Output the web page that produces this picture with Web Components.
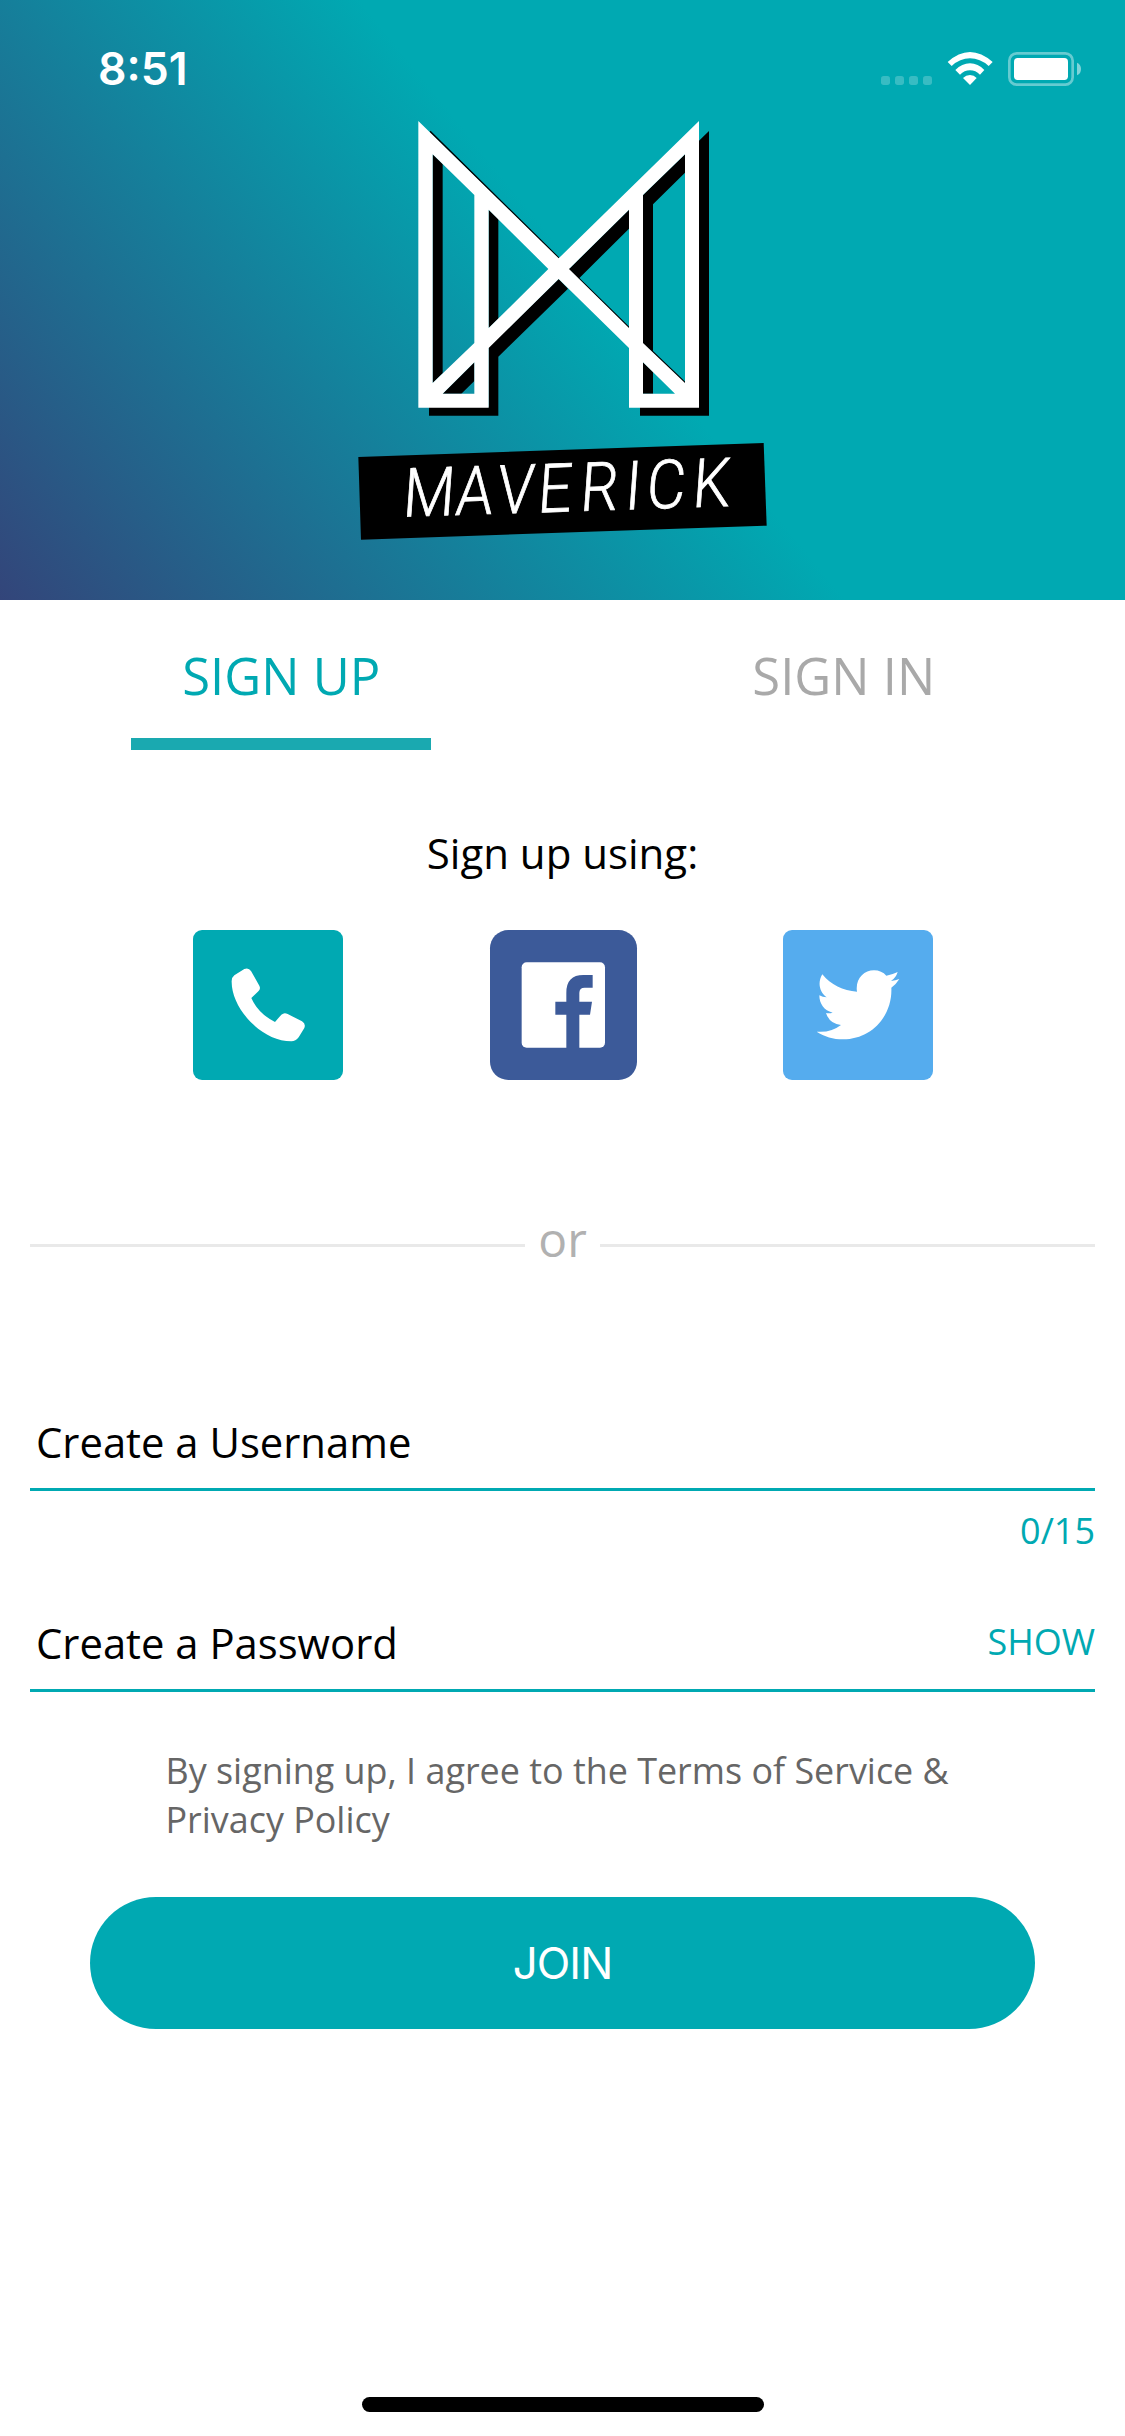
<!DOCTYPE html>
<html lang="en">
<head>
<meta charset="utf-8">
<title>Maverick</title>
<style>
html,body{margin:0;padding:0;background:#fff}
body{width:1125px;height:2436px;overflow:hidden;font-family:"Open Sans",sans-serif}
</style>
</head>
<body>
<maverick-app></maverick-app>
<script>
const define = (name, html) => customElements.define(name, class extends HTMLElement {
  constructor() {
    super();
    const t = document.createElement('template');
    t.innerHTML = html;
    this.attachShadow({ mode: 'open' }).append(t.content.cloneNode(true));
  }
});

define('status-bar', `
<style>
:host{display:flex;box-sizing:border-box;height:100px;padding:0 43px 0 98px;justify-content:space-between;font-family:Inter,sans-serif;color:#fff}
.time{font-size:44.5px;font-weight:600;line-height:54px;margin-top:42px;letter-spacing:0}
svg{display:block;margin-top:50px}
</style>
<div class="time">8:51</div>
<svg width="202" height="38" viewBox="0 0 606 114" fill="#fff">
  <g fill-opacity=".22"><rect x="3" y="78" width="27" height="27" rx="8"/><rect x="45" y="78" width="27" height="27" rx="8"/><rect x="87" y="78" width="27" height="27" rx="8"/><rect x="129" y="78" width="27" height="27" rx="8"/></g>
  <path d="M203 36Q236 6 270 6T338 36L326 48Q300 25 270 25T215 48Z"/>
  <path d="M226 60Q246 40 270 40T313 60L300 74Q287 61 270 61T240 74Z"/>
  <path d="M249 84Q258 75 270 75T290 84L270 105Z"/>
  <rect x="388" y="10" width="190" height="94" rx="22" fill="none" stroke="#fff" stroke-opacity=".4" stroke-width="8"/>
  <rect x="402" y="24" width="162" height="66" rx="11"/>
  <path d="M591 38Q603 43 603 57T591 76Z" fill-opacity=".5"/>
</svg>`);

define('brand-logo', `
<style>:host{display:block;width:440px;height:460px}svg{display:block}text{font-family:Roboto,sans-serif;font-weight:300;font-size:203px}</style>
<svg width="440" height="460" viewBox="0 0 1320 1380">
  <g fill="#000">
    <path d="M278 163l30 29v628l-30 29zM446 329l29 28v299l-29 28zM308 881l95-94v56l-39 38z"/>
    <path d="M656 537l28 29L475 770v177H267v-27h179V742z"/>
    <path d="M687 507L867 329v57L716 536zM909 285l126-122v55l-96 95v443l-30-27zM909 787l30 28v66h-30z"/>
    <path d="M1077 122l30-29v854H900v-27h177z"/>
    <path d="M270 94L656 474M686 506L867 683M909 728L1035 848" fill="none" stroke="#000" stroke-width="5"/>
  </g>
  <path fill="#fff" fill-rule="evenodd" d="M235 63L656 475 1077 63V923H867V744L656 537 446 744V923H235ZM278 163V849L403 729V285ZM446 329V684L625 507ZM308 881H403V787ZM1035 163L909 285V729L1035 849ZM867 329L687 507 867 684ZM1005 881L909 787V881Z"/>
  <path d="M55 1071L1271 1029 1280 1277 63 1319Z"/>
  <text fill="#fff" stroke="#fff" stroke-width="2.5" transform="translate(203 1250) rotate(-1.9) skewX(-6) scale(.88 1)" x="-19 160 301 440 585 738 811 968">MAVERICK</text>
</svg>`);

define('brand-header', `
<style>
:host{display:flex;flex-direction:column;height:600px;background:linear-gradient(51deg,#33457a 0,#00a9b2 657px)}
brand-logo{margin-left:340px}
</style>
<status-bar></status-bar><brand-logo></brand-logo>`);

define('auth-tab', `
<style>
:host{flex:1;display:flex;flex-direction:column;align-items:center;color:#a9a9a9}
.l{font-size:50.8px;line-height:70px;margin-top:41px}
.u{width:300px;height:12px;margin-top:27px}
:host([active]){color:#00a9b2}
:host([active]) .u{background:#1aa9b0}
</style>
<div class="l"><slot></slot></div><div class="u"></div>`);

define('social-button', `
<style>:host{display:block;width:150px;height:150px}::slotted(svg){display:block}</style><slot></slot>`);

define('or-divider', `
<style>
:host{display:flex;align-items:center;height:66px;margin:0 30px;color:#b1b1b1;font-size:48px;line-height:60px}
i{flex:1;height:3px;background:#e9e9e9;margin-top:7px}
span{width:75px;text-align:center;padding-bottom:6px}
</style><i></i><span><slot></slot></span><i></i>`);

define('form-field', `
<style>
:host{display:flex;box-sizing:border-box;margin:0 30px;height:90px;padding-left:6px;border-bottom:3px solid #00a9b2;justify-content:space-between;font-size:41.8px;line-height:60px;color:#000}
.l{margin-top:11px}
::slotted([slot=action]){font-size:36px;color:#00a9b2;line-height:60px;margin-top:10px}
</style><div class="l"><slot></slot></div><slot name="action"></slot>`);

define('join-button', `
<style>:host{display:flex;box-sizing:border-box;align-items:center;justify-content:center;height:132px;padding-top:2px;margin:0 90px;border-radius:66px;background:#00a9b2;color:#fff;font:400 43.8px/54px Inter,sans-serif;letter-spacing:-.9px}</style><slot></slot>`);

define('home-indicator', `<style>:host{display:block;width:402px;height:15px;border-radius:8px;background:#000}</style>`);

define('maverick-app', `
<style>
:host{display:flex;flex-direction:column;width:1125px;height:2436px;background:#fff;font-family:"Open Sans",sans-serif}
nav{display:flex;height:150px}
.using{text-align:center;font-size:42px;line-height:60px;margin-top:73px;color:#000}
.social{display:flex;justify-content:space-between;padding:0 192px 0 193px;margin-top:47px}
or-divider{margin-top:129px}
.user{margin-top:126px}
.count{font-size:36px;line-height:50px;color:#00a9b2;text-align:right;margin:15px 30px 0}
.pass{margin-top:46px}
.terms{font-size:35.9px;line-height:49px;color:#666;margin:54px 140px 0 165.5px}
join-button{margin-top:53px}
home-indicator{margin:368px auto 0}
</style>
<brand-header></brand-header>
<nav><auth-tab active>SIGN UP</auth-tab><auth-tab>SIGN IN</auth-tab></nav>
<div class="using">Sign up using:</div>
<div class="social">
  <social-button><svg width="150" height="150" viewBox="0 0 450 450"><rect width="450" height="450" rx="27" fill="#00a9b2"/><path fill="#fff" d="M124 136L154 117Q167 112 174 123L199 167Q204 177 196 184L175 204Q195 250 246 276L265 254Q274 246 284 252L327 274Q339 281 334 294L317 322Q308 334 295 334C205 334 116 235 116 156Q115 143 124 136Z"/></svg></social-button>
  <social-button><svg width="150" height="150" viewBox="-4 0 450 450"><rect x="2" width="441" height="450" rx="55" fill="#3c5a99"/><rect x="97" y="97" width="250" height="256" rx="15" fill="#fff"/><path fill="#3c5a99" d="M231 354V254H198V215H231V188Q231 135 282 135H310V173H286Q270 173 270 189V215H308L302 254H270V354Z"/></svg></social-button>
  <social-button><svg width="150" height="150" viewBox="0 0 450 450"><rect width="450" height="450" rx="27" fill="#55acee"/><path fill="#fff" d="M118 133C143 164 180 183 222 185C216 148 242 121 273 121C288 121 301 127 310 137Q328 134 344 126Q339 143 324 153Q337 151 349 147Q340 162 325 173C329 254 269 328 180 328C151 328 124 320 101 305Q143 309 174 285Q140 282 129 249Q139 251 149 248C123 242 109 221 109 196Q119 202 131 202C109 186 103 158 118 133Z"/></svg></social-button>
</div>
<or-divider>or</or-divider>
<form-field class="user">Create a Username</form-field>
<div class="count">0/15</div>
<form-field class="pass">Create a Password<span slot="action">SHOW</span></form-field>
<div class="terms">By signing up, I agree to the Terms of Service &amp;<br>Privacy Policy</div>
<join-button>JOIN</join-button>
<home-indicator></home-indicator>`);
</script>
</body>
</html>
